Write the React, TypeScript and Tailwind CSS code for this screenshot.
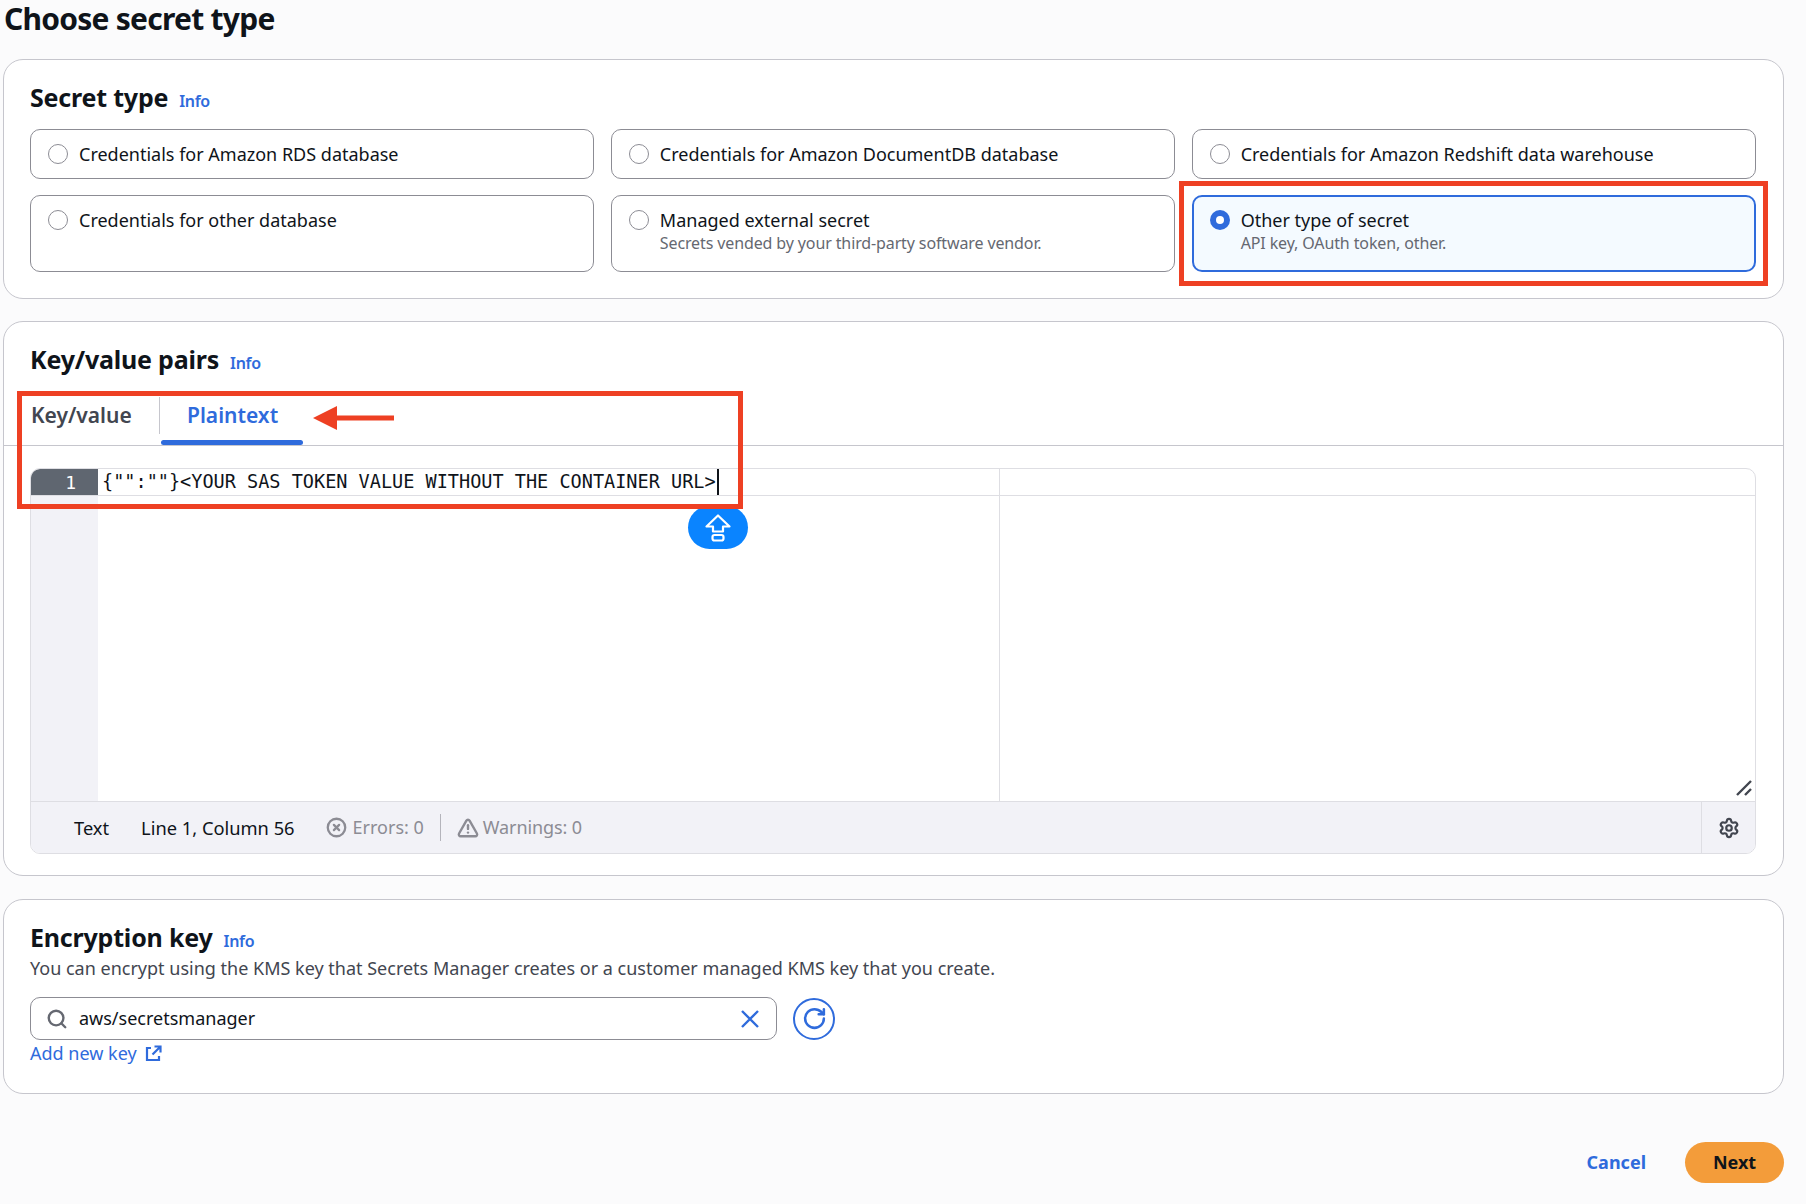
import { CircleX, RotateCw, Search, Settings, TriangleAlert } from 'lucide-react'

const OPTIONS = [
  { title: 'Credentials for Amazon RDS database' },
  { title: 'Credentials for Amazon DocumentDB database' },
  { title: 'Credentials for Amazon Redshift data warehouse' },
  { title: 'Credentials for other database' },
  { title: 'Managed external secret', desc: 'Secrets vended by your third-party software vendor.' },
  { title: 'Other type of secret', desc: 'API key, OAuth token, other.', selected: true }
]

function Heading({ title, className }: { title: string; className: string }) {
  return (
    <div className={`flex items-center ${className}`}>
      <h2 className="text-[25px] leading-[32px] font-bold text-[#0f141a] tracking-[-0.2px]">{title}</h2>
      <a className="ml-[11px] mt-[8px] text-[16px] font-semibold text-[#2f6bdc] tracking-[-0.3px]">Info</a>
    </div>
  )
}

function OptionCard({ title, desc, selected }: { title: string; desc?: string; selected?: boolean }) {
  return (
    <div
      className={
        selected
          ? 'relative flex items-start rounded-[10px] border-2 border-[#2f6bdc] bg-[#f4faff] pl-[16px] pt-[11px]'
          : 'flex items-start rounded-[10px] border border-[#8c8c94] bg-white pl-[17px] pt-[12px]'
      }
    >
      {selected ? (
        <span className="mt-[2px] flex size-[20px] items-center justify-center rounded-full bg-[#2f6bdc]">
          <span className="size-[8px] rounded-full bg-white" />
        </span>
      ) : (
        <span className="mt-[2px] size-[20px] rounded-full border border-[#8c8c94] bg-white" />
      )}
      <div className="ml-[11px]">
        <div className="text-[18px] leading-[24px] text-[#0f141a]">{title}</div>
        {desc && <div className="text-[16px] leading-[22px] text-[#656871] tracking-[-0.12px]">{desc}</div>}
      </div>
      {selected && <div className="pointer-events-none absolute -left-[15px] -right-[14px] -inset-y-[16px] border-[5px] border-[#ee4023]" />}
    </div>
  )
}

function UploadIcon() {
  return (
    <svg width="30" height="30" viewBox="0 0 30 30" fill="none" stroke="white" strokeWidth="2.2" strokeLinejoin="round">
      <path d="M15 2.5 3.5 13.5h6.5v5h10v-5h6.5z" />
      <rect x="9.5" y="22" width="11" height="5.5" rx="2" />
    </svg>
  )
}

function ExternalIcon() {
  return (
    <svg width="17" height="17" viewBox="0 0 17 17" fill="none" stroke="#2f6bdc" strokeWidth="2.2">
      <path d="M6 3H2v12h12v-4" />
      <path d="M9.5 1.5h6v6M15.5 1.5 7.5 9.5" />
    </svg>
  )
}

export default function App() {
  return (
    <div className="min-h-[1204px] bg-[#fbfbfc] pl-[3px] pr-[22px] font-['Noto_Sans',sans-serif] text-[#0f141a]">
      <h1 className="h-[59px] pl-[1px] text-[30px] leading-[38px] font-bold tracking-[-0.75px]">Choose secret type</h1>

      {/* Secret type */}
      <section className="h-[240px] rounded-[20px] border border-[#c6c6cd] bg-white px-[26px] pt-[21px]">
        <Heading title="Secret type" className="h-[32px]" />
        <div className="mt-[16px] grid grid-cols-3 grid-rows-[50px_77px] gap-x-[16.5px] gap-y-[16px] pr-[1px]">
          {OPTIONS.map((o) => (
            <OptionCard key={o.title} title={o.title} desc={o.desc} selected={o.selected} />
          ))}
        </div>
      </section>

      {/* Key/value pairs */}
      <section className="relative mt-[22px] h-[555px] rounded-[20px] border border-[#c6c6cd] bg-white">
        <Heading title="Key/value pairs" className="mt-[21px] h-[32px] pl-[26px]" />
        <div className="mt-[15px] flex h-[56px] border-b border-[#c6c6cd] pl-[27px]">
          <div className="mt-[7px] h-[37px] w-[129px] border-r border-[#c6c6cd] text-[21px] leading-[36px] font-semibold text-[#424650]">Key/value</div>
          <div className="relative h-[55px] w-[143px] pl-[27px] text-[21px] leading-[51px] font-semibold text-[#2f6bdc]">
            Plaintext
            <div className="absolute bottom-0 left-[1px] right-0 h-[5px] rounded-full bg-[#2f6bdc]" />
          </div>
        </div>

        <div className="ml-[26px] mr-[27px] mt-[22px] flex h-[386px] flex-col overflow-hidden rounded-[10px] border border-[#dedee3]">
          <div className="flex h-[27px] border-b border-[#dedee3]">
            <div className="w-[67px] rounded-tl-[8px] bg-[#5f6670] pr-[22px] text-right font-['DejaVu_Sans_Mono'] text-[18px] leading-[27px] text-white">1</div>
            <div className="flex w-[902px] border-r border-[#dedee3] pl-[4px] font-['DejaVu_Sans_Mono'] text-[18.55px] leading-[26px] text-[#0f141a]">
              <span className="whitespace-pre">{'{"":""}<YOUR SAS TOKEN VALUE WITHOUT THE CONTAINER URL>'}</span>
              <span className="ml-[1px] h-[26px] w-[2px] bg-[#0f141a]" />
            </div>
          </div>
          <div className="relative flex flex-1">
            <div className="w-[67px] bg-[#f2f2f7]" />
            <div className="w-[902px] border-r border-[#dedee3]" />
            <svg className="absolute bottom-[5px] right-[3px]" width="16" height="16" viewBox="0 0 16 16" stroke="#424650" strokeWidth="2.4">
              <path d="M1 15 15 1M9 15l6-6" />
            </svg>
          </div>
          <div className="flex h-[52px] items-center border-t border-[#dedee3] bg-[#f2f2f7] pl-[43px] text-[18px]">
            <span className="text-[18.3px]">Text</span>
            <span className="ml-[32px] text-[18.3px]">Line 1, Column 56</span>
            <CircleX className="ml-[31px] size-[21px] text-[#8c8c94]" strokeWidth={2.6} />
            <span className="ml-[6px] text-[#8c8c94]">Errors: 0</span>
            <span className="ml-[16px] h-[27px] w-px bg-[#b4b4bb]" />
            <TriangleAlert className="ml-[16px] size-[22px] text-[#8c8c94]" strokeWidth={2.6} />
            <span className="ml-[4px] text-[#8c8c94] tracking-[-0.1px]">Warnings: 0</span>
            <div className="ml-auto flex h-full w-[54px] items-center justify-center border-l border-[#dedee3]">
              <Settings className="size-[22px] text-[#424650]" strokeWidth={2.4} />
            </div>
          </div>
        </div>

        {/* overlays from the annotated screenshot */}
        <button className="absolute left-[684px] top-[184px] flex h-[43px] w-[60px] items-center justify-center rounded-full bg-[#0a84ff]">
          <UploadIcon />
        </button>
        <div className="pointer-events-none absolute left-[13px] top-[69px] h-[118px] w-[726px] border-[5px] border-[#ee4023]" />
        <svg className="absolute left-[309px] top-[84px]" width="81" height="24" viewBox="0 0 81 24" fill="#ee4023">
          <path d="M0 12 24 0v9.5h57v5H24V24z" />
        </svg>
      </section>

      {/* Encryption key */}
      <section className="mt-[23px] h-[195px] rounded-[20px] border border-[#c6c6cd] bg-white px-[26px] pt-[21px]">
        <Heading title="Encryption key" className="h-[32px]" />
        <p className="text-[18px] leading-[30px] text-[#424650]">
          You can encrypt using the KMS key that Secrets Manager creates or a customer managed KMS key that you create.
        </p>
        <div className="mt-[14px] flex items-center">
          <div className="flex h-[43px] w-[747px] items-center rounded-[10px] border border-[#8c8c94] pl-[15px] pr-[16px]">
            <Search className="size-[22px] text-[#656871]" strokeWidth={2.6} />
            <span className="ml-[11px] text-[18px]">aws/secretsmanager</span>
            <svg className="ml-auto" width="20" height="20" viewBox="0 0 20 20" stroke="#2f6bdc" strokeWidth="2.4">
              <path d="M2 2l16 16M18 2 2 18" />
            </svg>
          </div>
          <div className="ml-[16px] flex size-[42px] items-center justify-center rounded-full border-2 border-[#2f6bdc]">
            <RotateCw className="size-[25px] text-[#2f6bdc]" strokeWidth={2.4} />
          </div>
        </div>
        <div className="flex h-[26px] items-center">
          <a className="text-[18px] text-[#2f6bdc]">Add new key</a>
          <span className="ml-[8px]">
            <ExternalIcon />
          </span>
        </div>
      </section>

      {/* Footer */}
      <div className="mt-[48px] flex h-[41px] items-center justify-end">
        <a className="text-[18px] font-bold text-[#2f6bdc]">Cancel</a>
        <button className="ml-[39px] h-[41px] w-[99px] rounded-full bg-[#f39c3a] text-[18px] font-bold text-[#0f141a]">Next</button>
      </div>
    </div>
  )
}
